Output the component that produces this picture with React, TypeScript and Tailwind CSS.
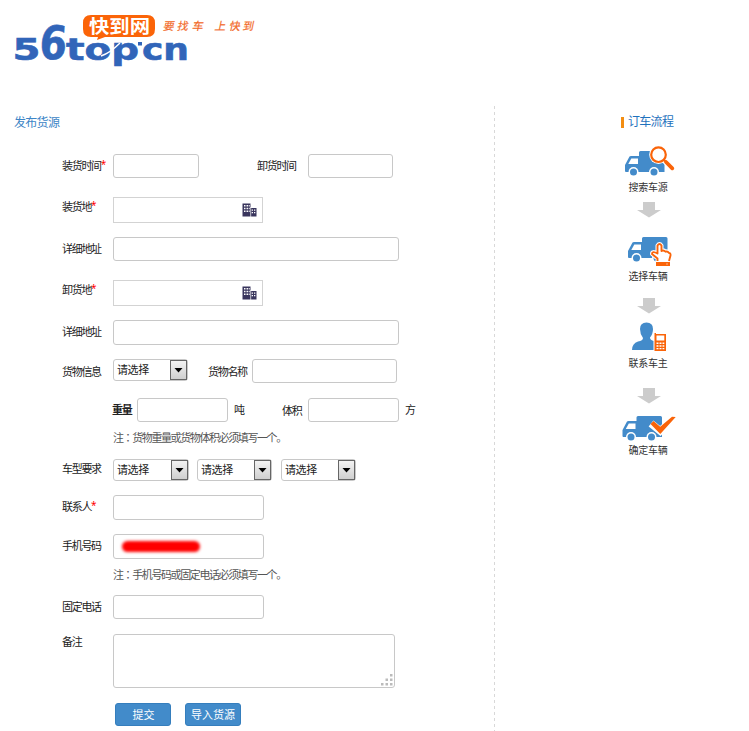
import React from "react";

const cjk = "font-['Noto_Sans_CJK_SC',sans-serif]";

function Logo() {
  return (
    <svg width="270" height="76" viewBox="0 0 270 76" className="block">
      <g fill="#3165b9" stroke="#3165b9" strokeWidth="0.6" fontFamily="'DejaVu Sans', sans-serif" fontWeight="700">
        <text x="12.500" y="59.5" fontSize="30.500" textLength="28" lengthAdjust="spacingAndGlyphs">5</text>
        <text x="0" y="0" fontSize="46" textLength="27.500" lengthAdjust="spacingAndGlyphs" transform="translate(38.500 59.300) skewX(-4)">6</text>
        <text x="66" y="59.5" fontSize="30" textLength="73" lengthAdjust="spacingAndGlyphs">top</text>
        <text x="142" y="59.5" fontSize="30" textLength="47" lengthAdjust="spacingAndGlyphs">cn</text>
      </g>
      <rect x="138" y="42" width="4" height="3.5" fill="#3165b9" />
      <path d="M101 56Q110 53 120 43" stroke="#fff" strokeWidth="1.4" fill="none" />
      <path d="M91 15h56q8 0 8 8v6q0 8-8 8h-42l-8 3 1-3h-7q-8 0-8-8v-6q0-8 8-8z" fill="#fb6408" />
      <text x="89" y="32.500" fontSize="18" fontWeight="700" textLength="61" lengthAdjust="spacingAndGlyphs" fill="#fff" fontFamily="'Noto Sans CJK SC', sans-serif">快到网</text>
      <g transform="translate(0 26) skewX(-12)" fill="#f26b2a" stroke="#f26b2a" strokeWidth="0.2" fontFamily="'Noto Sans CJK SC', sans-serif" fontSize="11">
        <text x="163.500 177.500 192.500 215 229.500 243" y="4">要找车上快到</text>
      </g>
    </svg>
  );
}

function Label({ children, className = "" }: { children: React.ReactNode; className?: string }) {
  return <div className={`h-4 shrink-0 whitespace-nowrap text-[11px] leading-[14px] tracking-[-1.3px] text-[#222] ${className}`}>{children}</div>;
}

function Star() {
  return <span className="align-[2px] font-['Noto_Sans'] text-[10px] leading-none tracking-normal text-[#f00]">*</span>;
}

function Field({ className }: { className: string }) {
  return <div className={`shrink-0 rounded-[3px] border border-[#c8c8c8] bg-white ${className}`} />;
}

function Select({ className }: { className: string }) {
  return (
    <div className={`flex h-[22px] shrink-0 rounded-[3px] border border-[#c8c8c8] ${className}`}>
      <span className="flex-1 whitespace-nowrap pl-[3px] text-[11px] leading-[19px] tracking-[-0.4px] text-[#222]">请选择</span>
      <span className="flex h-5 w-[17px] items-center justify-center border border-[#666] bg-linear-to-b from-[#f3f3f3] to-[#cfcfcf]">
        <svg width="9" height="5" viewBox="0 0 9 5"><path d="M0.500 0h8L4.500 4.500z" fill="#000" /></svg>
      </span>
    </div>
  );
}

function PlaceField() {
  return (
    <div className="flex h-[26px] w-[150px] shrink-0 items-center justify-end border border-[#d3d3d3] pr-[5px]">
      <svg width="15" height="14" viewBox="0 0 15 14">
        <path d="M0.500 0.500h8v13h-8zM8.500 5h6v8.500h-6z" fill="#39355d" />
        <path d="M2 2h1.500v1.500H2zM4.500 2H6v1.500H4.500zM6.700 2h1v1.500h-1zM2 4.700h1.500v1.500H2zM4.500 4.700H6v1.500H4.500zM6.700 4.700h1v1.500h-1zM2 7.500h1.500V9H2zM4.500 7.500H6V9H4.500zM6.700 7.500h1V9h-1zM9.700 6.500h1.300v1.300H9.700zM12 6.500h1.300v1.300H12zM9.700 9h1.300v1.300H9.700zM12 9h1.300v1.300H12z" fill="#fff" />
        <path d="M8.700 4v10" stroke="#fff" strokeWidth="0.7" />
      </svg>
    </div>
  );
}

function Row({ className, children }: { className: string; children: React.ReactNode }) {
  return <div className={`flex items-start pl-[62px] ${className}`}>{children}</div>;
}

function Note({ className, children }: { className: string; children: React.ReactNode }) {
  return (
    <p className={`h-4 pl-[113px] text-[11px] leading-[14px] tracking-[-1.4px] text-[#555] ${className}`}>
      注<span className="font-['Noto_Sans_CJK_TC',sans-serif]">：</span>{children}
    </p>
  );
}

function Truck() {
  return (
    <>
      <path d="M14 1.500Q14 0 15.500 0H38q1.500 0 1.500 1.500V21H1q-1 0-1-1v-6l4.500-8.500Q5 5 6 5H14z" fill="#438bca" />
      <path d="M6.300 7.500H13V13H3.300z" fill="#fff" />
      <circle cx="8.500" cy="21" r="5" fill="#fff" />
      <circle cx="29" cy="21" r="5" fill="#fff" />
      <circle cx="8.500" cy="21" r="3.500" fill="#438bca" />
      <circle cx="29" cy="21" r="3.500" fill="#438bca" />
    </>
  );
}

function SearchIcon() {
  return (
    <svg width="60" height="34" viewBox="618 144 60 34" className="block">
      <g transform="translate(625 151)"><Truck /></g>
      <circle cx="658.500" cy="154.700" r="9.300" fill="#fff" />
      <path d="M663 159l11 11" stroke="#fff" strokeWidth="6" />
      <circle cx="658.500" cy="154.700" r="7.300" fill="#fff" stroke="#fa6409" strokeWidth="2.200" />
      <path d="M664 160l2 2" stroke="#fa6409" strokeWidth="2" />
      <path d="M666 162l6.300 6.300" stroke="#fa6409" strokeWidth="3.800" strokeLinecap="round" />
    </svg>
  );
}

function ChooseIcon() {
  return (
    <svg width="60" height="34" viewBox="618 234 60 34" className="block">
      <g transform="translate(628 237)"><Truck /></g>
      <path d="M657.500 261v-2.500l-5.500-4.500q0-3.500 5.500-.500v-8q2-3 4 0v5.500q2-1.500 4 .700 2-1 3.500 1.300 1.800 0 1.500 2.500l-1.500 5.500v5H657z" fill="#fff" stroke="#fff" strokeWidth="4" strokeLinejoin="round" />
      <path d="M657.500 261v-2.500l-5.500-4.500q0-3.500 5.500-.500v-8q2-3 4 0v5.500q2-1.500 4 .700 2-1 3.500 1.300 1.800 0 1.500 2.500l-1.500 5.500" fill="#fff" stroke="#fa6409" strokeWidth="1.900" strokeLinejoin="round" />
      <rect x="656" y="262" width="14" height="4" fill="#fa6409" />
      <rect x="666.500" y="263.500" width="1" height="1" fill="#fff" />
    </svg>
  );
}

function ContactIcon() {
  return (
    <svg width="60" height="34" viewBox="618 320 60 34" className="block">
      <path d="M640 329q0-6.500 6.500-6.500t6.500 6.500q0 5-3 8.500 0 2.500 4 3.500V350h-22q0-6.500 6-8.500 5-1 5-3.500-3-4-3-9z" fill="#438bca" />
      <path d="M653.500 332.500v18h11v-16h-9.500" fill="#fff" />
      <path d="M654.500 333h1.500v1h10v17h-11.500z" fill="#fa6409" />
      <path d="M656.500 335.500h7.800v5h-7.800zM656.500 342.500h2v1.500h-2zM659.500 342.500h2v1.500h-2zM662.500 342.500h1.800v1.500h-1.800zM656.500 345.200h2v1.500h-2zM659.500 345.200h2v1.500h-2zM662.500 345.200h1.800v1.500h-1.800zM656.500 348h2v1.300h-2zM659.500 348h2v1.300h-2zM662.500 348h1.800v1.300h-1.800z" fill="#fff" />
    </svg>
  );
}

function ConfirmIcon() {
  return (
    <svg width="60" height="34" viewBox="618 411 60 34" className="block">
      <g transform="translate(622.500 416)"><Truck /></g>
      <path d="M651 423.500l9.300 7.500L674 418" fill="none" stroke="#fff" strokeWidth="7.500" />
      <path d="M650.500 424l3-3 6.700 5.700L672 416.800l3.700.2L660.300 434z" fill="#fa6409" />
    </svg>
  );
}

function Arrow({ className }: { className: string }) {
  return (
    <svg width="24" height="16" viewBox="0 0 24 16" className={`ml-[2px] block ${className}`}>
      <path d="M6 0h12v8h6L12 15.500 0 8h6z" fill="#ccc" />
    </svg>
  );
}

function StepName({ children, className }: { children: React.ReactNode; className: string }) {
  return <div className={`h-4 text-[10px] leading-[15px] tracking-[-0.3px] text-[#333] ${className}`}>{children}</div>;
}

export default function App() {
  return (
    <div className={`flex h-[731px] w-[749px] flex-col overflow-hidden bg-white ${cjk}`}>
      <header className="h-[106px] shrink-0"><Logo /></header>
      <main className="flex flex-1">
        <section className="w-[494px] shrink-0">
          <h1 className="ml-[14px] mt-2 h-4 text-[12px] leading-4 tracking-[-0.7px] text-[#3d85c6]">发布货源</h1>
          <Row className="mt-6 h-6">
            <Label className="mt-1 w-[51px]">装货时间<Star /></Label>
            <Field className="h-6 w-[86px]" />
            <Label className="ml-[58px] mt-1 w-[51px]">卸货时间</Label>
            <Field className="h-6 w-[85px]" />
          </Row>
          <Row className="mt-[19px] h-[26px]">
            <Label className="mt-[2px] w-[51px]">装货地<Star /></Label>
            <PlaceField />
          </Row>
          <Row className="mt-[14px] h-6">
            <Label className="mt-1 w-[51px]">详细地址</Label>
            <Field className="h-6 w-[286px]" />
          </Row>
          <Row className="mt-[19px] h-[26px]">
            <Label className="mt-[2px] w-[51px]">卸货地<Star /></Label>
            <PlaceField />
          </Row>
          <Row className="mt-[14px] h-[25px]">
            <Label className="mt-1 w-[51px]">详细地址</Label>
            <Field className="h-[25px] w-[286px]" />
          </Row>
          <Row className="mt-[14px] h-6">
            <Label className="mt-[5px] w-[51px]">货物信息</Label>
            <Select className="w-[75px]" />
            <Label className="ml-5 mt-[5px] w-11">货物名称</Label>
            <Field className="h-6 w-[145px]" />
          </Row>
          <Row className="mt-[15px] h-6">
            <Label className="ml-[50px] mt-1 w-[25px] font-bold">重量</Label>
            <Field className="h-6 w-[91px]" />
            <Label className="ml-[6px] mt-1 w-12">吨</Label>
            <Label className="mt-[5px] w-[26px]">体积</Label>
            <Field className="h-6 w-[91px]" />
            <Label className="ml-[6px] mt-1">方</Label>
          </Row>
          <Note className="mt-2">货物重量或货物体积必须填写一个。</Note>
          <Row className="mt-[13px] h-[22px]">
            <Label className="mt-[2px] w-[51px]">车型要求</Label>
            <Select className="w-[76px]" />
            <Select className="ml-2 w-[75px]" />
            <Select className="ml-[9px] w-[75px]" />
          </Row>
          <Row className="mt-[14px] h-[25px]">
            <Label className="mt-1 w-[51px]">联系人<Star /></Label>
            <Field className="h-[25px] w-[151px]" />
          </Row>
          <Row className="mt-[14px] h-[25px]">
            <Label className="mt-1 w-[51px]">手机号码</Label>
            <div className="flex h-[25px] w-[151px] items-center rounded-[3px] border border-[#c8c8c8] pl-2">
              <span className="h-[11px] w-[78px] rounded-full bg-[#f00] blur-[1.5px]" />
            </div>
          </Row>
          <Note className="mt-2">手机号码或固定电话必须填写一个。</Note>
          <Row className="mt-[12px] h-6">
            <Label className="mt-1 w-[51px]">固定电话</Label>
            <Field className="h-6 w-[151px]" />
          </Row>
          <Row className="mt-[15px] h-[54px]">
            <Label className="w-[51px]">备注</Label>
            <div className="flex h-[54px] w-[282px] items-end justify-end rounded-[3px] border border-[#c8c8c8] pb-px pr-px">
              <svg width="12" height="12" viewBox="0 0 12 12"><path d="M9 0h2.500v2.500H9zM4.500 4.500H7V7H4.500zM9 4.500h2.500V7H9zM0 9h2.500v2.500H0zM4.500 9H7v2.500H4.500zM9 9h2.500v2.500H9z" fill="#bbb" /></svg>
            </div>
          </Row>
          <div className="mt-[15px] flex gap-[14px] pl-[115px] text-[11px] text-white">
            <button className="h-[23px] w-14 rounded-[3px] border border-[#357ebd] bg-[#428bca] pl-px leading-[21px]">提交</button>
            <button className="h-[23px] w-14 rounded-[3px] border border-[#357ebd] bg-[#428bca] leading-[21px]">导入货源</button>
          </div>
        </section>
        <div className="w-px shrink-0 bg-[repeating-linear-gradient(to_bottom,#d8d8d8_0px,#d8d8d8_3px,transparent_3px,transparent_6px)]" />
        <aside className="flex-1">
          <div className="ml-[126px] mt-[7px] flex h-4 items-center">
            <span className="mt-[3px] h-[11px] w-[3px] bg-[#f38d11]" />
            <h2 className="ml-1 text-[12px] leading-4 tracking-[-0.7px] text-[#1f72bd]">订车流程</h2>
          </div>
          <div className="ml-[123px] mt-[15px] flex w-[60px] flex-col items-center">
            <SearchIcon />
            <StepName className="mt-px">搜索车源</StepName>
            <Arrow className="mt-[7px]" />
            <div className="mt-4"><ChooseIcon /></div>
            <StepName className="mt-0">选择车辆</StepName>
            <Arrow className="mt-[14px]" />
            <div className="mt-[6px]"><ContactIcon /></div>
            <StepName className="mt-px">联系车主</StepName>
            <Arrow className="mt-[17px]" />
            <div className="mt-[7px]"><ConfirmIcon /></div>
            <StepName className="-mt-[3px]">确定车辆</StepName>
          </div>
        </aside>
      </main>
    </div>
  );
}
